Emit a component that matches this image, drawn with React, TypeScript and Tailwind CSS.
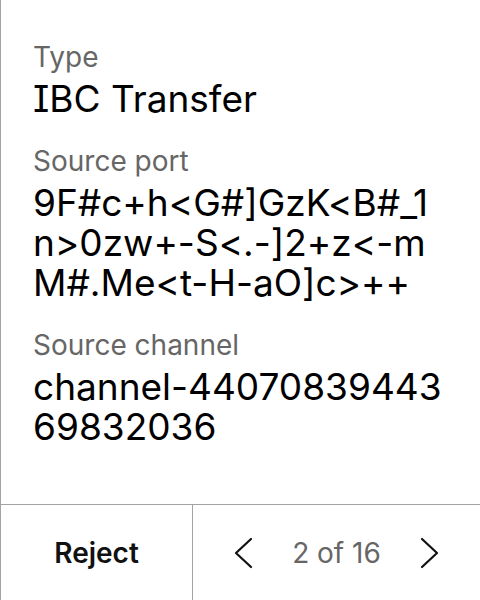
const fields = [
  { label: "Type", value: "IBC Transfer" },
  { label: "Source port", value: "9F#c+h<G#]GzK<B#_1n>0zw+-S<.-]2+z<-mM#.Me<t-H-aO]c>++" },
  { label: "Source channel", value: "channel-4407083944369832036" },
];

const Chevron = ({ dir }: { dir: "left" | "right" }) => (
  <svg width="20" height="32" viewBox="0 0 20 32" fill="none" stroke="#111" strokeWidth="2.2" strokeLinecap="round" strokeLinejoin="round">
    {dir === "left" ? <polyline points="17,2 2,16 17,30" /> : <polyline points="3,2 18,16 3,30" />}
  </svg>
);

export default function App() {
  return (
    <div className="w-[480px] h-[600px] bg-white border-l border-[#a3a3a3] flex flex-col font-['Inter',sans-serif] [font-feature-settings:'cv08'_1,'calt'_0]">
      <div className="flex-1 pt-[39px] pl-[32px] pr-[34px] flex flex-col gap-[24px]">
        {fields.map((f) => (
          <div key={f.label} className="flex flex-col gap-[4px]">
            <div className="text-[28px] leading-[36px] text-[#666666]">{f.label}</div>
            <div className="text-[37px] leading-[40px] text-black break-all">{f.value}</div>
          </div>
        ))}
      </div>
      <div className="h-[96px] border-t border-[#a3a3a3] flex">
        <button className="w-[192px] border-r border-[#a3a3a3] text-[28px] font-semibold text-[#111]">
          Reject
        </button>
        <div className="flex-1 flex items-center justify-center gap-[38px]">
          <Chevron dir="left" />
          <span className="text-[28px] text-[#666666]">2 of 16</span>
          <Chevron dir="right" />
        </div>
      </div>
    </div>
  );
}
